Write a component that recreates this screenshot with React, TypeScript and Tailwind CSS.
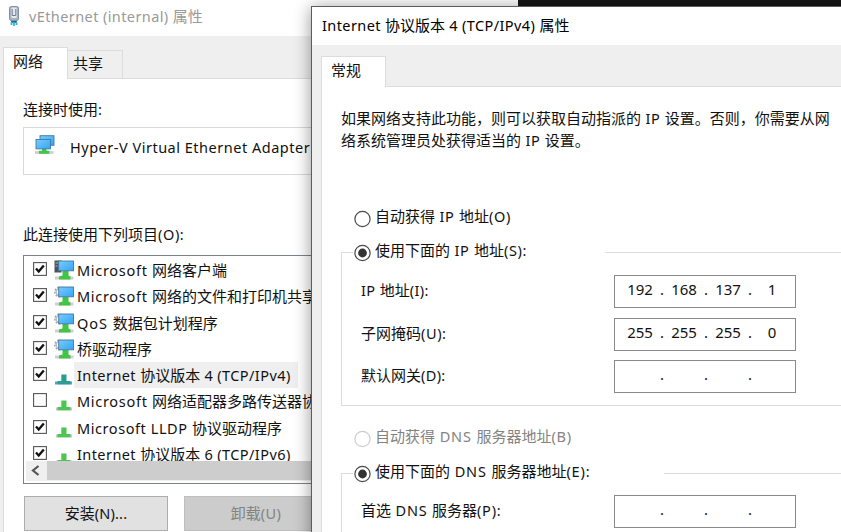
import { Fragment, ReactNode } from "react";

// Latin runs are set a little differently from the Han characters beside them.
function Mix({ text, latin = "tracking-[0.6px]" }: { text: string; latin?: string }) {
  const runs = text.match(/[\u3000-\u303f\u4e00-\u9fff\uff00-\uffef]+|[^\u3000-\u303f\u4e00-\u9fff\uff00-\uffef]+/g) ?? [];
  return (
    <>
      {runs.map((run, i) =>
        /[\u3000-\u9fff\uff00-\uffef]/.test(run) ? (
          <Fragment key={i}>{run}</Fragment>
        ) : (
          <span key={i} className={`whitespace-pre font-['Noto_Sans',sans-serif] text-[14.5px] leading-none ${latin}`}>{run}</span>
        ),
      )}
    </>
  );
}

function Label({ children, className = "" }: { children: ReactNode; className?: string }) {
  return <div className={`h-5 shrink-0 whitespace-nowrap leading-5 ${className}`}>{children}</div>;
}

function PlugIcon() {
  return (
    <svg className="mt-[5px] h-[22px] w-3 shrink-0" viewBox="0 0 12 22">
      <rect x="3.2" y="15" width="5.6" height="3" fill="#27658a" />
      <path d="M3.5 17v3M6 17v4M8.5 17v3" stroke="#35b3e3" strokeWidth="1.8" />
      <rect x="1.5" y="1.5" width="9" height="14" rx="1.8" fill="#a9b4c2" stroke="#8090a1" />
      <rect x="3.3" y="2.5" width="5.4" height="10.5" rx="1" fill="#e3e8ef" />
      <path d="M4.2 4v6.5h3.6V4" fill="none" stroke="#6d7b8d" strokeWidth="1" />
    </svg>
  );
}

function Defs() {
  return (
    <svg className="absolute h-0 w-0">
      <defs>
        <linearGradient id="screen" x1="0" y1="0" x2="1" y2="1">
          <stop offset="0" stopColor="#7accfc" />
          <stop offset="1" stopColor="#33a4f5" />
        </linearGradient>
      </defs>
    </svg>
  );
}

function AdapterIcon() {
  return (
    <svg className="h-5 w-5 shrink-0" viewBox="0 0 20 20">
      <path d="M0 17.5h18.5" stroke="#cfcfcf" strokeWidth="2.8" />
      <path d="M7 13.5h4.5v2.3h2.7v3H4v-3h3z" fill="#42c447" />
      <rect x="5" y="0.7" width="14" height="9.6" fill="url(#screen)" stroke="#3f7ba5" strokeWidth="0.9" />
      <rect x="1" y="4.5" width="14.5" height="9.4" fill="url(#screen)" stroke="#3f7ba5" strokeWidth="0.9" />
    </svg>
  );
}

type Kind = "client" | "service" | "selected" | "protocol";

function ItemIcon({ kind }: { kind: Kind }) {
  if (kind === "selected" || kind === "protocol") {
    const sel = kind === "selected";
    return (
      <svg className="h-5 w-5 shrink-0" viewBox="0 0 20 20">
        <path d={sel ? "M1 18h17" : "M2 18h16"} stroke={sel ? "#5a9fd0" : "#c8c8c8"} strokeWidth="3" />
        <path d="M7.3 9.5h5.2v6.5h4v3.3h-13v-3.3h3.8z" fill={sel ? "#2d9c91" : "#4cc552"} />
      </svg>
    );
  }
  return (
    <svg className="h-5 w-5 shrink-0" viewBox="0 0 20 20">
      {kind === "client" ? (
        <g>
          <rect x="0.5" y="0.5" width="7" height="12" fill="#4c5358" />
          <path d="M1.5 3h3M1.5 6h2" stroke="#aeb6ba" />
        </g>
      ) : (
        <g fill="none">
          <circle cx="5.5" cy="6" r="4.7" stroke="#a0a7ad" strokeWidth="1.5" strokeDasharray="1.8 1.4" />
          <circle cx="5.5" cy="6" r="3.4" stroke="#b3bac0" strokeWidth="1.5" />
        </g>
      )}
      <path d="M1 18h18.5" stroke="#cfcfcf" strokeWidth="3" />
      <path d="M8.5 11h6v4.5l2 1v3H5v-3l3.5-1z" fill="#42c447" />
      <rect x="4.7" y="1" width="14.8" height="9.8" fill="url(#screen)" stroke="#44799c" strokeWidth="0.9" />
    </svg>
  );
}

function Check({ on }: { on: boolean }) {
  return (
    <svg className="-mt-[2px] h-[14px] w-[14px] shrink-0" viewBox="0 0 14 14">
      <rect x="0.6" y="0.6" width="12.8" height="12.8" fill="#fff" stroke="#555" strokeWidth="1.1" />
      {on && <path d="M3 6.6l2.7 3L10.8 3.4" fill="none" stroke="#111" strokeWidth="2.3" />}
    </svg>
  );
}

function Radio({ on = false, disabled = false }: { on?: boolean; disabled?: boolean }) {
  return (
    <svg className="mt-[3px] h-[18px] w-[18px] shrink-0" viewBox="0 0 18 18">
      <circle cx="9.5" cy="9" r="7.6" fill="#fff" stroke={disabled ? "#cdcdcd" : "#4a4a4a"} strokeWidth="1.2" />
      {on && <circle cx="9.5" cy="9" r="4.4" fill="#333" />}
    </svg>
  );
}

const items: { text: string; kind: Kind; on: boolean; latin?: string }[] = [
  { text: "Microsoft 网络客户端", kind: "client", on: true, latin: "tracking-[0.7px]" },
  { text: "Microsoft 网络的文件和打印机共享", kind: "service", on: true, latin: "tracking-[0.7px]" },
  { text: "QoS 数据包计划程序", kind: "service", on: true, latin: "tracking-[1px]" },
  { text: "桥驱动程序", kind: "service", on: true },
  { text: "Internet 协议版本 4 (TCP/IPv4)", kind: "selected", on: true, latin: "tracking-[0.42px]" },
  { text: "Microsoft 网络适配器多路传送器协议", kind: "protocol", on: false, latin: "tracking-[0.7px]" },
  { text: "Microsoft LLDP 协议驱动程序", kind: "protocol", on: true, latin: "tracking-[0.57px]" },
  { text: "Internet 协议版本 6 (TCP/IPv6)", kind: "protocol", on: true, latin: "tracking-[0.42px]" },
];

function AdapterWindow() {
  return (
    <div className="absolute left-0 top-0 flex h-[532px] w-[518px] flex-col bg-[#efefef]">
      <div className="flex h-9 shrink-0 bg-white pl-2 text-[#999]">
        <PlugIcon />
        <Label className="ml-[9px] mt-[6px]">
          <Mix text="vEthernet (internal) 属性" latin="tracking-[0.4px]" />
        </Label>
      </div>
      <div className="flex h-[42px] shrink-0 items-end pl-[3px]">
        <div className="z-10 -mb-px h-8 w-[65px] border border-b-0 border-[#dcdcdc] bg-white pl-[9px] pt-[3px]">
          <Label>网络</Label>
        </div>
        <div className="h-7 w-[55px] border border-b-0 border-l-0 border-[#dcdcdc] pl-[5px] pt-[2px]">
          <Label>共享</Label>
        </div>
      </div>
      <div className="ml-[3px] flex-1 border-l border-t border-[#dcdcdc] bg-white pl-[19px]">
        <Label className="mt-[20px]"><Mix text="连接时使用:" /></Label>
        <div className="mt-[8px] flex h-[48px] border border-[#d9d9d9] pl-[11px]">
          <div className="mt-[7px]"><AdapterIcon /></div>
          <Label className="ml-[15px] mt-[9px]"><Mix text="Hyper-V Virtual Ethernet Adapter" latin="tracking-[0.51px]" /></Label>
        </div>
        <Label className="mt-[49px]"><Mix text="此连接使用下列项目(O):" /></Label>
        <div className="mt-[11px] h-[229px] border border-[#7c828c]">
          <div className="h-[205px] overflow-hidden pt-px">
            {items.map((it) => (
              <div key={it.text} className="flex h-[26.25px] items-center pl-[9px]">
                <Check on={it.on} />
                <div className="ml-[7px]"><ItemIcon kind={it.kind} /></div>
                <div className={`flex h-[26px] items-center pl-[3px] pr-[7px] ${it.kind === "selected" ? "bg-[#efefef]" : ""}`}>
                  <Label><Mix text={it.text} latin={it.latin} /></Label>
                </div>
              </div>
            ))}
          </div>
          <div className="ml-[2px] flex h-[20px] bg-[#efefef]">
            <svg className="h-5 w-[21px] shrink-0" viewBox="0 0 21 20">
              <path d="M12.5 5L7 9.5l5.5 4.5" fill="none" stroke="#555" strokeWidth="2.2" />
            </svg>
            <div className="h-[19px] flex-1 bg-[#cdcdcd]" />
          </div>
        </div>
        <div className="mt-[12px] flex gap-4 pl-px">
          <div className="flex h-[35px] w-[144px] justify-center border border-[#adadad] bg-[#e1e1e1] pt-[6px]">
            <Label><Mix text="安装(N)..." latin="tracking-[0.2px]" /></Label>
          </div>
          <div className="flex h-[35px] w-[144px] justify-center border border-[#bfbfbf] bg-[#ccc] pt-[6px] text-[#838383]">
            <Label><Mix text="卸载(U)" latin="tracking-[0.4px]" /></Label>
          </div>
        </div>
      </div>
    </div>
  );
}

function AddressBox({ parts }: { parts: string[] }) {
  return (
    <div className="flex h-[33px] w-[182px] shrink-0 border border-[#8a8a8a] bg-white pl-[12px] pt-[3px] font-['Noto_Sans',sans-serif] text-[15px] leading-5">
      {parts.map((p, i) => (
        <Fragment key={i}>
          <span className="w-[26px] text-center">{p}</span>
          {i < 3 && <span className="w-[18px] text-center">.</span>}
        </Fragment>
      ))}
    </div>
  );
}

function AddressRow({ label, parts, latin }: { label: string; parts: string[]; latin?: string }) {
  return (
    <div className="flex h-[42.5px] pl-[19px]">
      <div className="w-[253px] shrink-0 pt-[5px]">
        <Label><Mix text={label} latin={latin} /></Label>
      </div>
      <AddressBox parts={parts} />
    </div>
  );
}

function ProtocolWindow() {
  return (
    <div className="absolute left-[311px] top-[6px] flex h-[540px] w-[560px] flex-col border border-[#5c5c5c] bg-[#efefef] shadow-[0_2px_16px_rgba(0,0,0,0.42)]">
      <div className="h-[38px] shrink-0 bg-white pl-[10px] pt-[8px] text-black">
        <Label><Mix text="Internet 协议版本 4 (TCP/IPv4) 属性" latin="tracking-[0.4px]" /></Label>
      </div>
      <div className="flex h-[41px] shrink-0 items-end pl-[9px]">
        <div className="z-10 -mb-px h-[31px] w-[65px] border border-b-0 border-[#dcdcdc] bg-white pl-[9px] pt-[3px]">
          <Label>常规</Label>
        </div>
      </div>
      <div className="ml-[9px] flex-1 border-l border-t border-[#dcdcdc] bg-white pl-[19px]">
        <p className="mt-[20px] h-[43px] whitespace-nowrap leading-[21.5px]">
          <Mix text="如果网络支持此功能，则可以获取自动指派的 IP 设置。否则，你需要从网" />
          <br />
          <Mix text="络系统管理员处获得适当的 IP 设置。" />
        </p>
        <div className="mt-[57px] flex h-[22px] pl-[12px]">
          <Radio />
          <Label className="-mt-px ml-1"><Mix text="自动获得 IP 地址(O)" latin="tracking-[0.67px]" /></Label>
        </div>
        <fieldset className="mt-[12px] h-[165px] w-[520px] border border-[#dcdcdc]">
          <legend className="ml-[11px] flex h-[22px] w-[252px]">
            <Radio on />
            <Label className="-mt-px ml-1"><Mix text="使用下面的 IP 地址(S):" latin="tracking-[0.67px]" /></Label>
          </legend>
          <div className="pt-[12px]">
            <AddressRow label="IP 地址(I):" parts={["192", "168", "137", "1"]} latin="tracking-[0.4px]" />
            <AddressRow label="子网掩码(U):" parts={["255", "255", "255", "0"]} />
            <AddressRow label="默认网关(D):" parts={["", "", "", ""]} latin="tracking-[0.35px]" />
          </div>
        </fieldset>
        <div className="mt-[21px] flex h-[22px] pl-[12px] text-[#838383]">
          <Radio disabled />
          <Label className="-mt-px ml-1"><Mix text="自动获得 DNS 服务器地址(B)" latin="tracking-[0.85px]" /></Label>
        </div>
        <fieldset className="mt-[13px] h-[165px] w-[520px] border border-[#dcdcdc]">
          <legend className="ml-[11px] flex h-[22px] w-[311px]">
            <Radio on />
            <Label className="-mt-px ml-1"><Mix text="使用下面的 DNS 服务器地址(E):" latin="tracking-[0.85px]" /></Label>
          </legend>
          <div className="pt-[11px]">
            <AddressRow label="首选 DNS 服务器(P):" parts={["", "", "", ""]} latin="tracking-[0.77px]" />
          </div>
        </fieldset>
      </div>
    </div>
  );
}

export default function App() {
  return (
    <div className="relative h-[532px] w-[841px] overflow-hidden bg-[#171717] font-['Noto_Sans_CJK_SC',sans-serif] text-[15px] text-[#111]">
      <Defs />
      <AdapterWindow />
      <ProtocolWindow />
    </div>
  );
}
